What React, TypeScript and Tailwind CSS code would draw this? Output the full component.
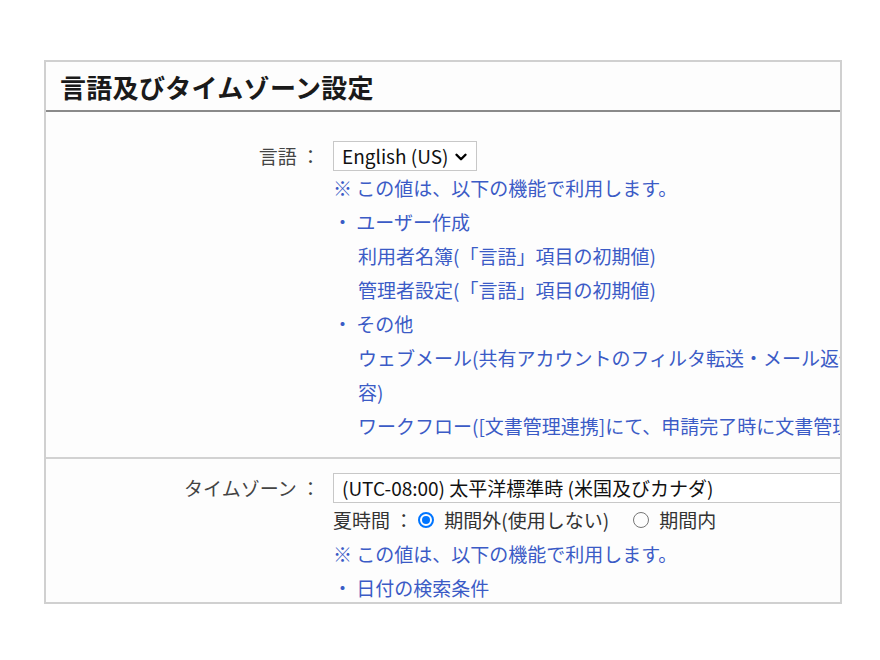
import { ChevronDown } from 'lucide-react';

const font = { fontFamily: '"Noto Sans CJK JP", "Noto Sans", sans-serif' };

function Radio({ checked }: { checked?: boolean }) {
  return (
    <span
      className={`inline-flex w-4 h-4 rounded-full items-center justify-center shrink-0 ${
        checked ? 'border-2 border-[#0075ff]' : 'border-[1.5px] border-[#767676]'
      }`}
    >
      {checked && <span className="w-2 h-2 rounded-full bg-[#0075ff]" />}
    </span>
  );
}

function FakeSelect({ value, width }: { value: string; width: string }) {
  return (
    <div
      className={`relative h-[30px] ${width} shrink-0 border border-[#c8c8c8] bg-white flex items-center pl-[8px] text-[19px] text-[#111] whitespace-nowrap`}
    >
      {value}
      <ChevronDown size={18} strokeWidth={3.2} className="absolute right-[6px] top-[6px] text-black" />
    </div>
  );
}

export default function App() {
  return (
    <div className="min-h-screen bg-white pt-[60px] pl-[44px] [text-spacing-trim:space-all]" style={font}>
      <div className="w-[798px] h-[544px] border-2 border-[#d0d0d0] bg-[#fdfdfd] overflow-hidden">
        {/* Title */}
        <h1 className="h-[50px] px-[14px] flex items-center text-[26px] tracking-[0.3px] font-bold text-[#1a1a1a] border-b-2 border-[#8a8a8a] whitespace-nowrap">
          言語及びタイムゾーン設定
        </h1>

        {/* Language */}
        <div className="flex pt-[29px] pb-[14px] border-b-2 border-[#d2d2d2]">
          <div className="w-[274px] shrink-0 h-[30px] flex items-center justify-end text-[19px] text-[#444] whitespace-nowrap">
            言語 ：
          </div>
          <div className="pl-[13px] text-[19px] leading-[34px] text-[#3b5bc6] whitespace-nowrap">
            <FakeSelect value="English (US)" width="w-[144px]" />
            <p>※ この値は、以下の機能で利用します。</p>
            <p>・ ユーザー作成</p>
            <div className="pl-[25px]">
              <p>利用者名簿(「言語」項目の初期値)</p>
              <p>管理者設定(「言語」項目の初期値)</p>
            </div>
            <p>・ その他</p>
            <div className="pl-[25px]">
              <p>
                ウェブメール(共有アカウントのフィルタ転送・メール返信時の引用内
                <br />
                容)
              </p>
              <p>ワークフロー([文書管理連携]にて、申請完了時に文書管理へ登録される内容)</p>
            </div>
          </div>
        </div>

        {/* Time zone */}
        <div className="flex pt-[14px]">
          <div className="w-[274px] shrink-0 h-[30px] flex items-center justify-end text-[19px] text-[#444] whitespace-nowrap">
            タイムゾーン ：
          </div>
          <div className="pl-[13px] text-[19px] leading-[34px] whitespace-nowrap">
            <FakeSelect value="(UTC-08:00) 太平洋標準時 (米国及びカナダ)" width="w-[620px]" />
            <div className="flex items-center text-[#333]">
              <span>夏時間 ：</span>
              <span className="ml-[5px] mr-[10px] flex"><Radio checked /></span>
              <span>期間外(使用しない)</span>
              <span className="ml-[24px] mr-[10px] flex"><Radio /></span>
              <span>期間内</span>
            </div>
            <p className="text-[#3b5bc6]">※ この値は、以下の機能で利用します。</p>
            <p className="text-[#3b5bc6]">・ 日付の検索条件</p>
          </div>
        </div>
      </div>
    </div>
  );
}
